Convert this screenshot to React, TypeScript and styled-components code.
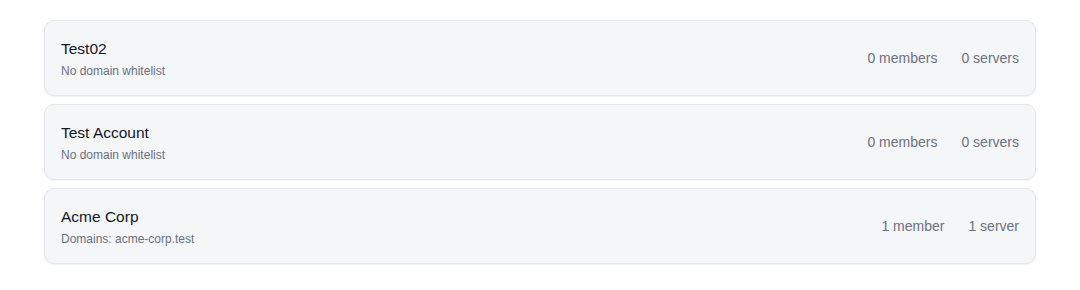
import React from 'react';
import styled, {createGlobalStyle} from "styled-components";

const GlobalStyle = createGlobalStyle`
  body {
    margin: 0;
    background: #ffffff;
    font-family: "Liberation Sans", Arial, sans-serif;
  }
`

type Org = { name: string, note: string, members: number, servers: number }

const orgs: Array<Org> = [
    {name: 'Test02', note: 'No domain whitelist', members: 0, servers: 0},
    {name: 'Test Account', note: 'No domain whitelist', members: 0, servers: 0},
    {name: 'Acme Corp', note: 'Domains: acme-corp.test', members: 1, servers: 1},
]

const plural = (n: number, word: string) => `${n} ${word}${n === 1 ? '' : 's'}`

export default function App() {
    return (
        <>
            <GlobalStyle/>
            <List>
                {orgs.map((org, index) => {
                    return <Card key={index}>
                        <Info>
                            <Name>{org.name}</Name>
                            <Note>{org.note}</Note>
                        </Info>
                        <Stats>
                            <Stat>{plural(org.members, 'member')}</Stat>
                            <Stat>{plural(org.servers, 'server')}</Stat>
                        </Stats>
                    </Card>
                })}
            </List>
        </>
    );
}

const List = styled.div`
  display: flex;
  flex-direction: column;
  gap: 8px;
  padding: 20px 44px;
`
const Card = styled.div`
  display: flex;
  align-items: center;
  justify-content: space-between;
  padding: 18px 16px;
  background: #f5f6f8;
  border: 1px solid #e4e6ea;
  border-radius: 10px;
  box-shadow: 0 1px 2px rgba(0, 0, 0, 0.06);
  box-sizing: border-box;
  height: 76px;
`
const Info = styled.div`
  display: flex;
  flex-direction: column;
  gap: 4px;
  padding-top: 2px;
`
const Name = styled.div`
  font-size: 15.5px;
  line-height: 20px;
  color: #111827;
`
const Note = styled.div`
  font-size: 12px;
  line-height: 16px;
  color: #6b7280;
`
const Stats = styled.div`
  display: flex;
  gap: 24px;
`
const Stat = styled.span`
  font-size: 14px;
  line-height: 18px;
  color: #6b7280;
`
